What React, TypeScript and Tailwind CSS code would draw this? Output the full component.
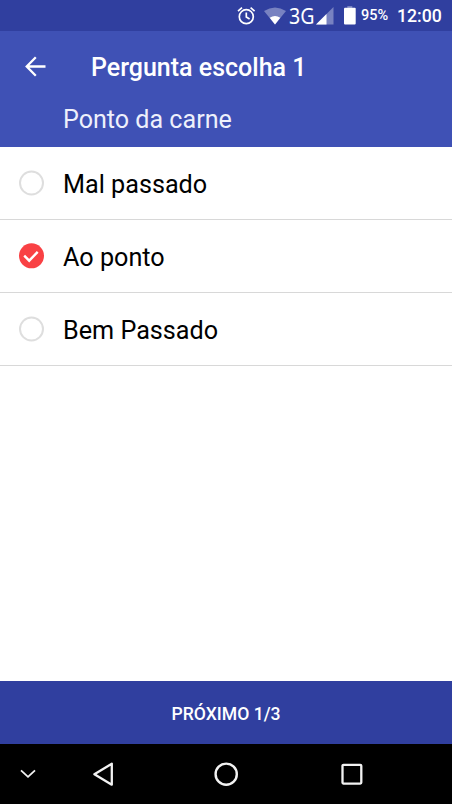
import { useState } from "react";

const options = ["Mal passado", "Ao ponto", "Bem Passado"];

function StatusBar() {
  return (
    <div className="flex h-[31px] shrink-0 items-center bg-[#303f9f] pl-[237px] text-white">
      <svg width="19" height="20" viewBox="0 0 19 20" fill="none" stroke="currentColor" strokeWidth="1.7" className="shrink-0">
        <circle cx="9.3" cy="10.7" r="7" />
        <path d="M9.3 6.5v4.6l3.3 2M1 5.1l4-3.4M17.6 5.1l-4-3.4" />
      </svg>
      <svg width="22" height="18" viewBox="0 0 22 18" className="ml-2 shrink-0">
        <path d="M0 4Q11-3 22 4L11 17.5Z" fill="#7882c1" />
        <path d="M5.7 10.8Q11 7.2 16.3 10.8L11 17.5Z" fill="white" />
      </svg>
      <span className="ml-[3px] w-[26px] shrink-0">
        <span className="inline-block origin-left scale-x-[0.87] font-['Noto_Sans',sans-serif] text-[22.5px] leading-[30px]">3G</span>
      </span>
      <svg width="18" height="18" viewBox="0 0 18 18" className="ml-[1px] shrink-0">
        <path d="M0 17.5L17.5 0V17.5Z" fill="#7882c1" />
        <path d="M0 17.5L10.5 7V17.5Z" fill="white" />
      </svg>
      <svg width="12" height="19" viewBox="0 0 12 19" className="ml-[10px] shrink-0">
        <path d="M3.3 0h5v2.3h-5z" fill="#7882c1" />
        <rect y="1.8" width="11.7" height="16.7" rx="1" fill="white" />
      </svg>
      <span className="ml-[5px] w-[28px] shrink-0 pt-px text-[14.5px] font-medium">95%</span>
      <span className="ml-[8px] pt-px text-[17.7px] font-medium">12:00</span>
    </div>
  );
}

function Header() {
  return (
    <header className="h-[116px] shrink-0 bg-[#3f51b5] text-white">
      <div className="flex h-[70px] items-center pl-[25px]">
        <svg width="21" height="21" viewBox="0 0 21 21" fill="none" stroke="currentColor" strokeWidth="2.3">
          <path d="M20.5 10.5H2M10.8 1.3L1.7 10.5l9.1 9.2" />
        </svg>
        <h1 className="ml-[45px] pt-[4px] text-[25px] leading-[30px] font-medium">Pergunta escolha 1</h1>
      </div>
      <p className="pt-[4px] pl-[63px] text-[25.1px] leading-[30px] text-[#eef0fb]">Ponto da carne</p>
    </header>
  );
}

function Radio({ checked }: { checked: boolean }) {
  return (
    <svg width="26" height="26" viewBox="0 0 26 26" fill="none" className="shrink-0">
      {checked ? (
        <>
          <circle cx="13.5" cy="12.8" r="12.5" fill="#f94144" />
          <path d="M6.2 12.7l5 5 8.5-8.8" stroke="white" strokeWidth="2.4" />
        </>
      ) : (
        <circle cx="13.5" cy="13" r="11.5" stroke="#dedede" strokeWidth="2" />
      )}
    </svg>
  );
}

function NavigationBar() {
  return (
    <nav className="flex h-[60px] shrink-0 items-center bg-black pl-[20px] text-[#f2f2f2]">
      <svg width="16" height="10" viewBox="0 0 16 10" fill="none" stroke="currentColor" strokeWidth="1.8">
        <path d="M1 1.3l7 6.5 7-6.5" />
      </svg>
      <svg width="22" height="24" viewBox="0 0 22 24" fill="none" stroke="currentColor" strokeWidth="2.3" strokeLinejoin="round" className="ml-[57px]">
        <path d="M18.8 1.7v21L1.4 12.2Z" />
      </svg>
      <svg width="24" height="24" viewBox="0 0 24 24" fill="none" stroke="currentColor" strokeWidth="2.4" className="ml-[99px]">
        <circle cx="12.2" cy="12.2" r="10.6" />
      </svg>
      <svg width="22" height="22" viewBox="0 0 22 22" fill="none" stroke="currentColor" strokeWidth="2.3" className="ml-[103px]">
        <rect x="1.5" y="1.8" width="18.8" height="18.8" rx="1" />
      </svg>
    </nav>
  );
}

export default function App() {
  const [selected, setSelected] = useState(1);
  return (
    <div className="flex h-[804px] w-[452px] flex-col overflow-hidden bg-white font-[Roboto,sans-serif]">
      <StatusBar />
      <Header />
      <main className="flex-1">
        {options.map((option, index) => (
          <button
            key={option}
            onClick={() => setSelected(index)}
            className="flex h-[73px] w-full items-center border-b border-[#d8d8d8] pl-[18px] text-left text-black"
          >
            <Radio checked={index === selected} />
            <span className="ml-[19px] pt-[4px] text-[25.2px] leading-[30px]">{option}</span>
          </button>
        ))}
      </main>
      <button className="h-[63px] shrink-0 bg-[#303f9f] pt-[3px] text-[17.6px] font-medium text-white">PRÓXIMO 1/3</button>
      <NavigationBar />
    </div>
  );
}
